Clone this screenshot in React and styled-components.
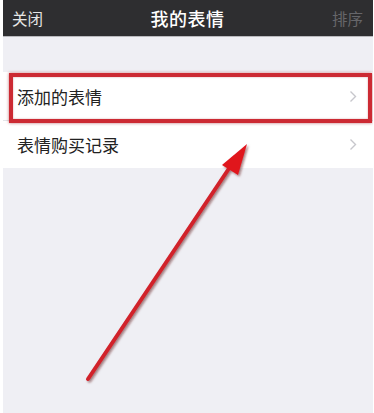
import React from "react";
import styled, { createGlobalStyle } from "styled-components";

const GlobalStyle = createGlobalStyle`
	html, body {
		margin: 0;
		padding: 0;
		background: #ffffff;
	}
	body {
		font-family: "Noto Sans CJK SC", "Noto Sans", sans-serif;
	}
`;

const Screen = styled.div`
	position: relative;
	margin: 0 1px 0 3px;
	height: 413px;
	background: #efeff4;
	overflow: hidden;
`;

const NavBar = styled.header`
	height: 36px;
	background: #2e2e30;
	border-bottom: 1px solid #b9b9bd;
	display: grid;
	grid-template-columns: 1fr auto 1fr;
	align-items: center;
	padding: 0 10px 0 9px;
`;

const NavButton = styled.span`
	font-size: 15.5px;
	color: ${(p) => (p.disabled ? "#66666a" : "#e6e6e6")};
	justify-self: ${(p) => (p.right ? "end" : "start")};
`;

const Title = styled.h1`
	margin: 0;
	font-size: 18px;
	font-weight: 500;
	color: #ffffff;
	letter-spacing: 0.5px;
`;

const List = styled.ul`
	list-style: none;
	margin: 35px 0 0;
	padding: 0;
	background: #ffffff;
`;

const Row = styled.li`
	position: relative;
	height: 48px;
	display: flex;
	align-items: center;
	justify-content: space-between;
	padding: 0 16px 0 14px;
	font-size: 17px;
	color: #222222;
	& + & {
		border-top: 1px solid #e4e4e8;
		height: 47px;
	}
`;

const Chevron = () => (
	<svg width="8" height="13" viewBox="0 0 8 13">
		<path d="M1.5 1.5 L6.5 6.5 L1.5 11.5" fill="none" stroke="#c7c7cc" strokeWidth="1.4" />
	</svg>
);

const Highlight = styled.div`
	position: absolute;
	z-index: 1;
	left: 6px;
	right: 1px;
	top: 1px;
	bottom: -3px;
	border: 4.5px solid #cc2a33;
	box-shadow: 0 0 3px rgba(150, 20, 30, 0.6), inset 0 0 2px rgba(150, 20, 30, 0.4);
	pointer-events: none;
`;

const ArrowLayer = styled.svg`
	position: absolute;
	z-index: 2;
	left: -3px;
	top: 0;
	pointer-events: none;
`;

const Arrow = () => (
	<ArrowLayer width="374" height="413" viewBox="0 0 374 413">
		<defs>
			<filter id="sh" x="-20%" y="-20%" width="140%" height="140%">
				<feDropShadow dx="1.5" dy="1.5" stdDeviation="1.2" floodColor="#5a0a10" floodOpacity="0.55" />
			</filter>
		</defs>
		<g filter="url(#sh)">
			<line x1="88" y1="379" x2="232" y2="164" stroke="#d1222b" strokeWidth="4" strokeLinecap="round" />
			<polygon points="247,144 222,165 238,175" fill="#e0141e" />
		</g>
	</ArrowLayer>
);

export default function App() {
	return (
		<>
			<GlobalStyle />
			<Screen>
				<NavBar>
					<NavButton>关闭</NavButton>
					<Title>我的表情</Title>
					<NavButton right disabled>
						排序
					</NavButton>
				</NavBar>
				<List>
					<Row>
						添加的表情
						<Chevron />
						<Highlight />
					</Row>
					<Row>
						表情购买记录
						<Chevron />
					</Row>
				</List>
				<Arrow />
			</Screen>
		</>
	);
}
